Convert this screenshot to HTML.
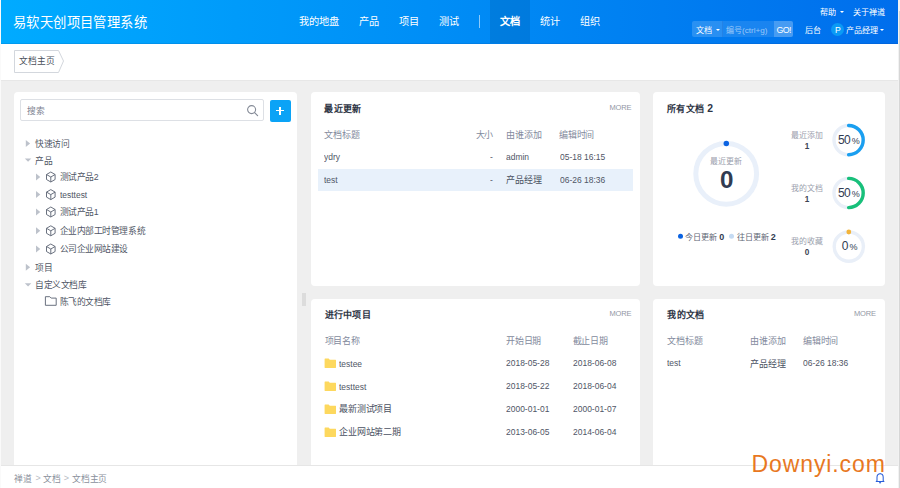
<!DOCTYPE html>
<html lang="zh-CN"><head><meta charset="utf-8">
<style>
*{box-sizing:border-box;margin:0;padding:0}
html,body{width:900px;height:488px;overflow:hidden}
body{font-family:"Liberation Sans",sans-serif;font-size:9px;color:#4a5162;background:#efefef;position:relative}
.t{position:absolute;white-space:nowrap;line-height:1}
.b{position:absolute}
svg{position:absolute;overflow:visible}
#hdr{position:absolute;left:1px;top:0;width:897px;height:44px;box-shadow:inset 0 -1px 0 rgba(0,40,120,.12);background:linear-gradient(to right,#00abff,#006eec)}
#hdr .t{color:#fff}
.nav{font-size:10.2px;top:17px}
.hs{font-size:8.1px}
.panel{position:absolute;background:#fff;border-radius:4px}
.ph{font-weight:bold;font-size:9px;color:#2d3444;letter-spacing:.3px}
.more{font-size:7.5px;color:#9297a5;letter-spacing:-.15px;margin-top:-.9px}
.th{color:#838a9d;font-size:9px;letter-spacing:-.25px}
.tr{color:#4f5665;font-size:8.75px;letter-spacing:-.45px}
.en{font-size:9.8px;margin-top:-.8px;transform:scaleX(.865);transform-origin:0 0;color:#4f5666}
.lb{font-size:7.9px;color:#9aa0ad}
</style></head><body>

<div id="hdr">
<div class="t " style="left:12px;top:16.2px;font-size:13.3px;letter-spacing:.4px">易软天创项目管理系统</div>
<div class="t nav" style="left:298px">我的地盘</div>
<div class="t nav" style="left:358px">产品</div>
<div class="t nav" style="left:398px">项目</div>
<div class="t nav" style="left:438px">测试</div>
<div class="t nav" style="left:539px">统计</div>
<div class="t nav" style="left:579px">组织</div>
<div class="b" style="left:478px;top:15px;width:1px;height:13px;background:rgba(255,255,255,.55)"></div>
<div class="b" style="left:489px;top:0;width:40px;height:43px;background:rgba(0,0,0,.09)"></div>
<div class="t nav" style="left:499px;font-weight:bold">文档</div>
<div class="t hs" style="left:818.5px;top:8.7px;">帮助</div>
<div class="b" style="left:839.2px;top:10.6px;width:0;height:0;border-left:2.4px solid transparent;border-right:2.4px solid transparent;border-top:2.8px solid #fff"></div>
<div class="t hs" style="left:851.5px;top:8.7px;">关于禅道</div>
<div class="b" style="left:691px;top:21px;width:31px;height:16px;background:rgba(255,255,255,.16);border-radius:2px 0 0 2px"></div>
<div class="b" style="left:721px;top:21px;width:1px;height:16px;background:rgba(0,40,140,.12)"></div>
<div class="b" style="left:722px;top:21px;width:51px;height:16px;background:rgba(255,255,255,.10)"></div>
<div class="t hs" style="left:694.8px;top:26.5px;">文档</div>
<div class="b" style="left:714.5px;top:28.5px;width:0;height:0;border-left:2.4px solid transparent;border-right:2.4px solid transparent;border-top:2.8px solid #fff"></div>
<div class="t hs" style="left:725px;top:26.5px;color:rgba(255,255,255,.55)">编号(ctrl+g)</div>
<div class="b" style="left:772.5px;top:21px;width:19.5px;height:16px;background:rgba(255,255,255,.28);border-radius:0 2px 2px 0"></div>
<div class="t " style="left:775.5px;top:25.6px;font-size:8.8px;letter-spacing:-.6px">GO!</div>
<div class="t hs" style="left:803.8px;top:26.5px;">后台</div>
<div class="b" style="left:830.2px;top:23.3px;width:13px;height:13px;border-radius:50%;background:#0a9af5"></div>
<div class="t " style="left:834px;top:26.2px;font-size:8.6px">P</div>
<div class="t hs" style="left:845px;top:26.5px;">产品经理</div>
<div class="b" style="left:879px;top:28.5px;width:0;height:0;border-left:2.4px solid transparent;border-right:2.4px solid transparent;border-top:2.8px solid #fff"></div>
</div>
<div class="b" style="left:1px;top:44px;width:897px;height:36px;background:#fff"></div>
<div class="b" style="left:1px;top:80px;width:897px;height:1px;background:#e7e7e7"></div>
<svg style="left:13px;top:50px" width="54" height="24" viewBox="0 0 54 24"><path d="M1.5 0.5 H45.5 L50.5 11 L45.5 22.5 H1.5 Z" fill="#fff" stroke="#d3d7dd" stroke-width="1"/></svg>
<div class="t " style="left:18.8px;top:56.6px;font-size:8.75px;color:#4a4f5a">文档主页</div>
<div class="b" style="left:14px;top:92px;width:283px;height:380px;background:#fff;border-radius:4px"></div>
<div class="b" style="left:20px;top:99.3px;width:244.3px;height:21.7px;border:1px solid #dde0e5;border-radius:2px;background:#fff"></div>
<div class="t " style="left:26.5px;top:106.5px;font-size:8.75px;color:#7c8290">搜索</div>
<svg style="left:246px;top:104px" width="13" height="13" viewBox="0 0 13 13"><circle cx="5.6" cy="5.6" r="4" fill="none" stroke="#858b97" stroke-width="1.1"/><path d="M8.6 8.6 L11.6 11.6" stroke="#858b97" stroke-width="1.2" stroke-linecap="round"/></svg>
<div class="b" style="left:269.6px;top:99.6px;width:21.2px;height:22.2px;background:#0ba3f6;border-radius:2px"></div>
<div class="b" style="left:275.7px;top:110.1px;width:8.6px;height:1.4px;background:#fff"></div>
<div class="b" style="left:279.3px;top:106.5px;width:1.4px;height:8.6px;background:#fff"></div>
<svg style="left:0;top:0" width="300" height="320"><g fill="#bdc2cb"><path d="M25.8 139.9 L30.1 143.4 L25.8 146.9Z"/><path d="M24.8 158.6 L31.3 158.6 L28.05 161.79999999999998Z"/><path d="M36 173.5 L40.3 177 L36 180.5Z"/><path d="M36 191.1 L40.3 194.6 L36 198.1Z"/><path d="M36 208.5 L40.3 212 L36 215.5Z"/><path d="M36 227.3 L40.3 230.8 L36 234.3Z"/><path d="M36 245.5 L40.3 249 L36 252.5Z"/><path d="M25.8 263.8 L30.1 267.3 L25.8 270.8Z"/><path d="M24.8 283.29999999999995 L31.3 283.29999999999995 L28.05 286.5Z"/></g><g fill="none" stroke="#626978" stroke-width="0.95" stroke-linejoin="round"><path d="M50.8 172 L55.1 174.5 L55.1 179.5 L50.8 182 L46.5 179.5 L46.5 174.5 Z M46.5 174.5 L50.8 177 L55.1 174.5 M50.8 177 L50.8 182"/><path d="M50.8 189.6 L55.1 192.1 L55.1 197.1 L50.8 199.6 L46.5 197.1 L46.5 192.1 Z M46.5 192.1 L50.8 194.6 L55.1 192.1 M50.8 194.6 L50.8 199.6"/><path d="M50.8 207 L55.1 209.5 L55.1 214.5 L50.8 217 L46.5 214.5 L46.5 209.5 Z M46.5 209.5 L50.8 212 L55.1 209.5 M50.8 212 L50.8 217"/><path d="M50.8 225.8 L55.1 228.3 L55.1 233.3 L50.8 235.8 L46.5 233.3 L46.5 228.3 Z M46.5 228.3 L50.8 230.8 L55.1 228.3 M50.8 230.8 L50.8 235.8"/><path d="M50.8 244 L55.1 246.5 L55.1 251.5 L50.8 254 L46.5 251.5 L46.5 246.5 Z M46.5 246.5 L50.8 249 L55.1 246.5 M50.8 249 L50.8 254"/><path d="M45.4 296.7 H49.8 L51.2 298.1 H56.2 V305.3 H45.4 Z"/></g></svg>
<div class="t tr" style="left:35px;top:139.8px;">快速访问</div>
<div class="t tr" style="left:35px;top:156.6px;">产品</div>
<div class="t tr" style="left:59.6px;top:173.4px;">测试产品2</div>
<div class="t tr" style="left:59.6px;top:190.0px;letter-spacing:0;font-size:9.6px;transform:scaleX(.88);transform-origin:0 0">testtest</div>
<div class="t tr" style="left:59.6px;top:208.4px;">测试产品1</div>
<div class="t tr" style="left:59.6px;top:227.2px;">企业内部工时管理系统</div>
<div class="t tr" style="left:59.6px;top:245.4px;">公司企业网站建设</div>
<div class="t tr" style="left:35px;top:263.7px;">项目</div>
<div class="t tr" style="left:35px;top:281.3px;">自定义文档库</div>
<div class="t tr" style="left:59.6px;top:297.7px;">陈飞的文档库</div>
<div class="b" style="left:302px;top:292.5px;width:4px;height:13.3px;background:#dcdcdc"></div>
<div class="b" style="left:311px;top:92px;width:329px;height:194px;background:#fff;border-radius:4px"></div>
<div class="t ph" style="left:324.3px;top:104.8px;">最近更新</div>
<div class="t more" style="left:609.5px;top:104.5px;">MORE</div>
<div class="t th" style="left:324.3px;top:130.8px;">文档标题</div>
<div class="t th" style="left:475.5px;top:130.8px;">大小</div>
<div class="t th" style="left:506.3px;top:130.8px;">由谁添加</div>
<div class="t th" style="left:559px;top:130.8px;">编辑时间</div>
<div class="b" style="left:318px;top:169.2px;width:314.6px;height:22.1px;background:#e8f1fb"></div>
<div class="t en" style="left:324.3px;top:152.6px;">ydry</div>
<div class="t en" style="left:490.4px;top:152.6px;">-</div>
<div class="t en" style="left:506.3px;top:152.6px;">admin</div>
<div class="t en" style="left:559.5px;top:152.6px;">05-18 16:15</div>
<div class="t en" style="left:324.3px;top:175.5px;">test</div>
<div class="t en" style="left:490.4px;top:175.5px;">-</div>
<div class="t th" style="left:506.3px;top:175.6px;color:#4a5162">产品经理</div>
<div class="t en" style="left:559.5px;top:175.5px;">06-26 18:36</div>
<div class="b" style="left:653px;top:92px;width:232px;height:194px;background:#fff;border-radius:4px"></div>
<div class="t ph" style="left:667.2px;top:105.2px;">所有文档 <span style="font-size:10.4px;letter-spacing:0;line-height:0;font-weight:bold">2</span></div>
<svg style="left:653px;top:92px" width="232" height="194">
  <circle cx="73.2" cy="81.8" r="30.4" fill="none" stroke="#e9f0fa" stroke-width="5"/>
  <circle cx="73.3" cy="51.5" r="2.75" fill="#0b63e2"/>
  <circle cx="195.6" cy="48.1" r="14.6" fill="none" stroke="#e9eff8" stroke-width="3.4"/>
  <path d="M195.6 33.5 A14.6 14.6 0 0 1 195.6 62.7" fill="none" stroke="#1a9ff0" stroke-width="3.4" stroke-linecap="round"/>
  <circle cx="195.6" cy="101" r="14.6" fill="none" stroke="#e9eff8" stroke-width="3.4"/>
  <path d="M195.6 86.4 A14.6 14.6 0 0 1 195.6 115.6" fill="none" stroke="#18c07a" stroke-width="3.4" stroke-linecap="round"/>
  <circle cx="195.8" cy="154.6" r="14.6" fill="none" stroke="#e9eff8" stroke-width="3.4"/>
  <circle cx="195.8" cy="140" r="2.4" fill="#f3b43a"/>
  <circle cx="27.5" cy="144.2" r="2.5" fill="#0b63e2"/>
  <circle cx="78.5" cy="144.2" r="2.5" fill="#c5dbf3"/>
</svg>
<div class="t lb" style="left:710.3px;top:158px;">最近更新</div>
<div class="t " style="left:720px;top:168.3px;font-size:24.2px;font-weight:bold;color:#313c52">0</div>
<div class="t " style="left:685px;top:232.9px;font-size:8.1px;color:#5d6473">今日更新 <b style="color:#313c52;font-size:9px">0</b></div>
<div class="t " style="left:736.5px;top:232.9px;font-size:8.1px;color:#5d6473">往日更新 <b style="color:#313c52;font-size:9px">2</b></div>
<div class="t lb" style="left:790.6px;top:132.0px;">最近添加</div>
<div class="t " style="left:804.8px;top:143.10000000000002px;font-size:8.2px;font-weight:bold;color:#3c4353">1</div>
<div class="t " style="left:838px;top:134.0px;font-size:12px;color:#313c52;letter-spacing:-.6px">50<span style="font-size:9px;margin-left:1.6px;letter-spacing:0">%</span></div>
<div class="t lb" style="left:790.6px;top:184.7px;">我的文档</div>
<div class="t " style="left:804.8px;top:195.8px;font-size:8.2px;font-weight:bold;color:#3c4353">1</div>
<div class="t " style="left:838px;top:186.7px;font-size:12px;color:#313c52;letter-spacing:-.6px">50<span style="font-size:9px;margin-left:1.6px;letter-spacing:0">%</span></div>
<div class="t lb" style="left:790.6px;top:238.1px;">我的收藏</div>
<div class="t " style="left:804.8px;top:249.20000000000002px;font-size:8.2px;font-weight:bold;color:#3c4353">0</div>
<div class="t " style="left:841.8px;top:240.1px;font-size:12px;color:#313c52;letter-spacing:-.6px">0<span style="font-size:9px;margin-left:1.6px;letter-spacing:0">%</span></div>
<div class="b" style="left:311px;top:299px;width:329px;height:180px;background:#fff;border-radius:4px"></div>
<div class="t ph" style="left:324.6px;top:311.2px;">进行中项目</div>
<div class="t more" style="left:609.4px;top:311.2px;">MORE</div>
<div class="t th" style="left:324.6px;top:337px;">项目名称</div>
<div class="t th" style="left:506.2px;top:337px;">开始日期</div>
<div class="t th" style="left:572.6px;top:337px;">截止日期</div>
<svg style="left:324px;top:350.4px" width="14" height="100"><g fill="#fdd85e"><path d="M0.6 9.0 Q0.6 8.6 1 8.6 H4.6 L5.8 9.8 H11.6 Q12 9.8 12 10.2 V17.6 Q12 18.0 11.6 18.0 H1 Q0.6 18.0 0.6 17.6 Z"/><path d="M0.6 32.0 Q0.6 31.6 1 31.6 H4.6 L5.8 32.8 H11.6 Q12 32.8 12 33.2 V40.6 Q12 41.0 11.6 41.0 H1 Q0.6 41.0 0.6 40.6 Z"/><path d="M0.6 54.89999999999998 Q0.6 54.49999999999998 1 54.49999999999998 H4.6 L5.8 55.699999999999974 H11.6 Q12 55.699999999999974 12 56.09999999999998 V63.49999999999998 Q12 63.89999999999998 11.6 63.89999999999998 H1 Q0.6 63.89999999999998 0.6 63.49999999999998 Z"/><path d="M0.6 77.89999999999998 Q0.6 77.49999999999997 1 77.49999999999997 H4.6 L5.8 78.69999999999997 H11.6 Q12 78.69999999999997 12 79.09999999999998 V86.49999999999997 Q12 86.89999999999998 11.6 86.89999999999998 H1 Q0.6 86.89999999999998 0.6 86.49999999999997 Z"/></g></svg>
<div class="t en" style="left:339.3px;top:359.5px;">testee</div>
<div class="t en" style="left:506.3px;top:358.5px;">2018-05-28</div>
<div class="t en" style="left:572.7px;top:358.5px;">2018-06-08</div>
<div class="t en" style="left:339.3px;top:382.5px;">testtest</div>
<div class="t en" style="left:506.3px;top:381.5px;">2018-05-22</div>
<div class="t en" style="left:572.7px;top:381.5px;">2018-06-04</div>
<div class="t th" style="left:339.3px;top:405.0px;color:#4a5162">最新测试项目</div>
<div class="t en" style="left:506.3px;top:404.4px;">2000-01-01</div>
<div class="t en" style="left:572.7px;top:404.4px;">2000-01-07</div>
<div class="t th" style="left:339.3px;top:428.0px;color:#4a5162">企业网站第二期</div>
<div class="t en" style="left:506.3px;top:427.4px;">2013-06-05</div>
<div class="t en" style="left:572.7px;top:427.4px;">2014-06-04</div>
<div class="b" style="left:653px;top:299px;width:232px;height:180px;background:#fff;border-radius:4px"></div>
<div class="t ph" style="left:667.3px;top:311.4px;">我的文档</div>
<div class="t more" style="left:854px;top:311.2px;">MORE</div>
<div class="t th" style="left:667.3px;top:337px;">文档标题</div>
<div class="t th" style="left:750.3px;top:337px;">由谁添加</div>
<div class="t th" style="left:803.2px;top:337px;">编辑时间</div>
<div class="t en" style="left:667.3px;top:358.8px;">test</div>
<div class="t th" style="left:750.3px;top:359.5px;color:#4a5162">产品经理</div>
<div class="t en" style="left:803.3px;top:358.8px;">06-26 18:36</div>
<div class="b" style="left:1px;top:465px;width:897px;height:23px;background:#fff;border-top:1px solid #e6e6e6"></div>
<div class="t " style="left:13.6px;top:474.8px;font-size:8.75px;color:#8a909c">禅道</div>
<div class="t " style="left:35.6px;top:474.3px;font-size:9px;color:#b8bcc4">&gt;</div>
<div class="t " style="left:42.6px;top:474.8px;font-size:8.75px;color:#8a909c">文档</div>
<div class="t " style="left:63.8px;top:474.3px;font-size:9px;color:#b8bcc4">&gt;</div>
<div class="t " style="left:72.4px;top:474.8px;font-size:8.75px;color:#8a909c;letter-spacing:-.3px">文档主页</div>
<svg style="left:874px;top:472px" width="12" height="12" viewBox="0 0 12 12"><path d="M3 8.7 V5.3 C3 3.2 4.3 1.7 6.1 1.7 C7.9 1.7 9.2 3.2 9.2 5.3 V8.7 L10 9.5 H2.2 Z M6.1 0.9 V1.7 M5.2 10.4 L6.1 11 L7 10.4" fill="none" stroke="#2a5fd9" stroke-width="1.05" stroke-linejoin="round"/></svg>
<div class="t " style="left:751.5px;top:453.4px;font-size:23px;color:#e8781f;letter-spacing:.9px">Downyi.com</div>
<div class="b" style="left:898px;top:0;width:2px;height:488px;background:#f2f2f2"></div>
<div class="b" style="left:899px;top:11px;width:1px;height:477px;background:#d6d6d6"></div>
<div class="b" style="left:0;top:0;width:1px;height:488px;background:#fafafa"></div>
</body></html>
